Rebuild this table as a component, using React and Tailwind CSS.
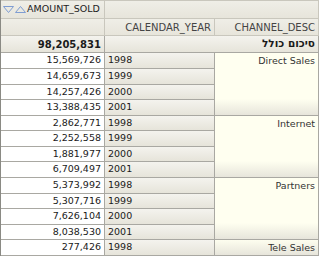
import React from "react";

const data = [
  ["15,569,726", "1998"],
  ["14,659,673", "1999"],
  ["14,257,426", "2000"],
  ["13,388,435", "2001"],
  ["2,862,771", "1998"],
  ["2,252,558", "1999"],
  ["1,881,977", "2000"],
  ["6,709,497", "2001"],
  ["5,373,992", "1998"],
  ["5,307,716", "1999"],
  ["7,626,104", "2000"],
  ["8,038,530", "2001"],
  ["277,426", "1998"],
];

const channels = [
  { name: "Direct Sales", start: "row-start-4 row-span-4" },
  { name: "Internet", start: "row-start-8 row-span-4" },
  { name: "Partners", start: "row-start-12 row-span-4" },
  { name: "Tele Sales", start: "row-start-16 row-span-1" },
];

const rowStarts = [
  "row-start-4",
  "row-start-5",
  "row-start-6",
  "row-start-7",
  "row-start-8",
  "row-start-9",
  "row-start-10",
  "row-start-11",
  "row-start-12",
  "row-start-13",
  "row-start-14",
  "row-start-15",
  "row-start-16",
];

const hdr = "bg-[linear-gradient(to_bottom,#efeee7,#e7e5db)]";
const yearBg = "bg-[linear-gradient(to_bottom,#f4f3ee,#e6e4da)]";

function SortArrows() {
  return (
    <svg width="25" height="9" viewBox="0 0 25 9" className="shrink-0">
      <path d="M1.5 1.5 L11.5 1.5 L6.5 7.5 Z" fill="none" stroke="#7f9dd2" strokeWidth="1" strokeLinejoin="round" />
      <path d="M13.5 7.5 L23.5 7.5 L18.5 1.5 Z" fill="none" stroke="#7f9dd2" strokeWidth="1" strokeLinejoin="round" />
    </svg>
  );
}

export default function App() {
  return (
    <div
      className="w-[320px] h-[257px] bg-white overflow-hidden text-[9.5px] text-[#1a1a1a]"
      style={{ fontFamily: "'DejaVu Sans', sans-serif" }}
    >
      <div className="grid grid-cols-[104px_110px_104px] grid-rows-[19px_17px_17px_16px_16px_15px_16px_15px_16px_15px_16px_16px_15px_16px_15px_16px] border-l border-[#8a8a84] w-[318px]">
        {/* header row 1 */}
        <div className={`col-start-1 row-start-1 ${hdr} border-t border-r border-b border-[#c9c7bd] flex items-center pl-[1px] whitespace-nowrap overflow-hidden`}>
          <SortArrows />
          <span className="text-[#222] text-[9.5px]">AMOUNT_SOLD</span>
        </div>
        <div className={`col-start-2 col-span-2 row-start-1 ${hdr} border-t border-r border-b border-[#c9c7bd]`} />
        {/* header row 2 */}
        <div className={`col-start-1 row-start-2 ${hdr} border-r border-b border-[#c9c7bd]`} />
        <div className={`col-start-2 row-start-2 ${hdr} border-r border-b border-[#c9c7bd] flex items-center justify-end pr-[3px] text-[#444] text-[10px]`}>
          CALENDAR_YEAR
        </div>
        <div className={`col-start-3 row-start-2 ${hdr} border-r border-b border-[#c9c7bd] flex items-center justify-end pr-[3px] text-[#444] text-[10px]`}>
          CHANNEL_DESC
        </div>
        {/* total row */}
        <div className={`col-start-1 row-start-3 ${yearBg} border-r border-b border-[#a9a8a2] flex items-center justify-end pr-[3px] font-bold text-[10px]`}>
          98,205,831
        </div>
        <div
          dir="rtl"
          className={`col-start-2 col-span-2 row-start-3 ${yearBg} border-r border-b border-[#a9a8a2] flex items-center justify-start pr-[3px] font-bold text-[10.5px]`}
        >
          סיכום כולל
        </div>
        {/* data */}
        {data.map(([amt, yr], i) => (
          <React.Fragment key={i}>
            <div className={`col-start-1 ${rowStarts[i]} bg-white border-r border-b border-[#a9a8a2] flex items-center justify-end pr-[3px]`}>
              {amt}
            </div>
            <div className={`col-start-2 ${rowStarts[i]} ${yearBg} border-r border-b border-[#a9a8a2] flex items-center pl-[3px]`}>
              {yr}
            </div>
          </React.Fragment>
        ))}
        {channels.map((c) => (
          <div
            key={c.name}
            className={`col-start-3 ${c.start} bg-[linear-gradient(to_bottom,#fffff0_calc(100%-16px),#e7e5db)] border-r border-b border-[#a9a8a2] flex items-start justify-end pr-[3px] pt-[1px] text-[#333]`}
          >
            {c.name}
          </div>
        ))}
      </div>
    </div>
  );
}
